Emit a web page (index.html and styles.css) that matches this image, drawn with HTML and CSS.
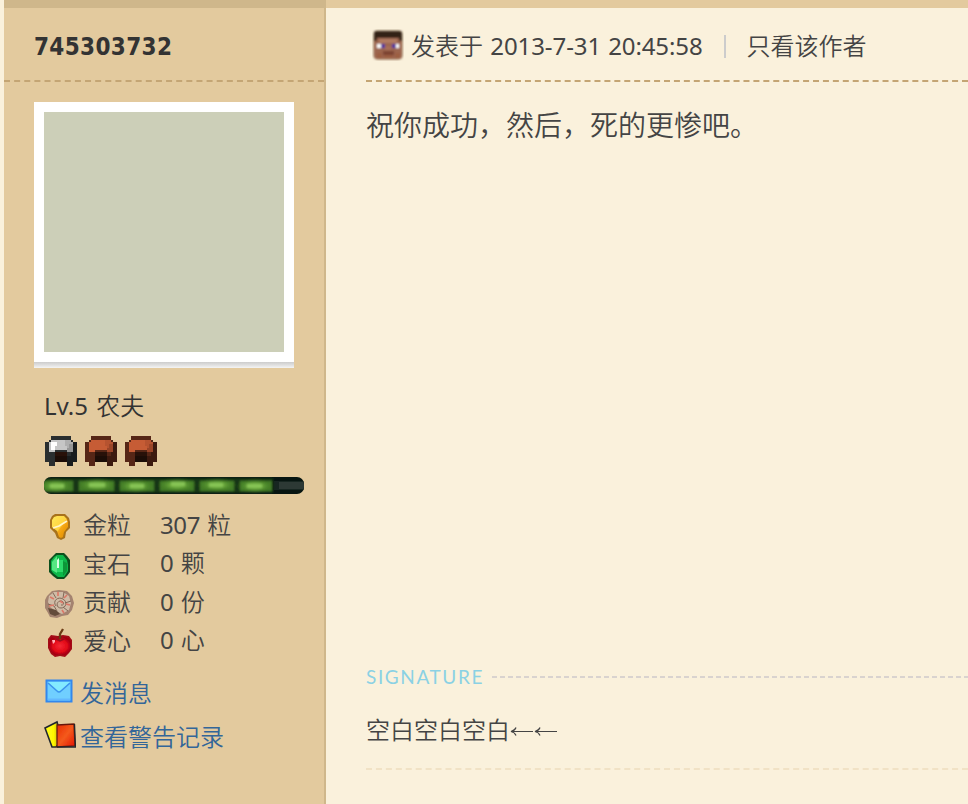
FILE: index.html
```html
<!DOCTYPE html>
<html lang="zh-CN">
<head>
<meta charset="utf-8">
<title>745303732</title>
<link rel="stylesheet" href="styles.css">
</head>
<body>
<svg class="defs" width="0" height="0">
  <defs>
    <linearGradient id="gold" x2="1" y2="1"><stop stop-color="#ffe85a"/><stop offset=".5" stop-color="#ffd43e"/><stop offset=".55" stop-color="#f7a915"/><stop offset="1" stop-color="#d98600"/></linearGradient>
    <linearGradient id="redcard" x2="1" y2="1"><stop stop-color="#e92a00"/><stop offset=".5" stop-color="#f45a1c"/><stop offset="1" stop-color="#e31200"/></linearGradient>
    <linearGradient id="yellowcard"><stop stop-color="#fffb20"/><stop offset=".5" stop-color="#fff600"/><stop offset="1" stop-color="#a89400"/></linearGradient>
    <radialGradient id="apple"><stop stop-color="#f52a35"/><stop offset=".65" stop-color="#e30918"/><stop offset="1" stop-color="#a60010"/></radialGradient>
    <radialGradient id="blob"><stop stop-color="#8acb57"/><stop offset=".4" stop-color="#69a83a" stop-opacity=".9"/><stop offset="1" stop-color="#3c7322" stop-opacity="0"/></radialGradient>
    <filter id="soft"><feGaussianBlur stdDeviation=".9"/></filter>
    <filter id="glow"><feGaussianBlur stdDeviation="1.3"/></filter>
    <filter id="fine"><feGaussianBlur stdDeviation=".45"/></filter>
    <g id="helmet">
      <path class="h-edge" d="M3 0h10v2h1v1h2v10h-2v2h-3V8H5v7H2v-2H0V3h2V2h1z"/>
      <path class="h-edge2" d="M14 3h2v10h-2v2h-3v-5h2V8h1z"/>
      <path class="h-main" d="M3 2h10v1h1v5h-3V7H5v1H2V3h1z"/>
      <path class="h-mid" d="M10 2h3v1h1v5h-3V5h-1z"/>
      <path class="h-shade" d="M12 4h2v4h-3V6h1z"/>
      <path class="h-hi" d="M3 3h3v2H5v2H3z"/>
      <path class="h-edge" d="M3 8h2V7h6v1h2v2H3z"/>
      <path fill="#281109" d="M5 8h6v5H5z"/>
      <path fill="#1c0d07" d="M5 10h6v3H5z"/>
    </g>
  </defs>
</svg>
<div class="post">
  <aside class="side">
    <div class="author">745303732</div>
    <div class="profile">
      <div class="avatar"><div class="photo"></div></div>
      <div class="info">
        <div class="level"><span class="num">Lv.5</span> 农夫</div>
        <div class="helmets">
          <svg class="iron" width="32" height="30" viewBox="0 0 16 15" shape-rendering="crispEdges"><use href="#helmet"/></svg>
          <svg class="leather" width="32" height="30" viewBox="0 0 16 15" shape-rendering="crispEdges"><use href="#helmet"/></svg>
          <svg class="leather" width="32" height="30" viewBox="0 0 16 15" shape-rendering="crispEdges"><use href="#helmet"/></svg>
        </div>
        <svg class="xp" width="260" height="18" viewBox="0 0 260 18">
          <clipPath id="pill"><rect width="260" height="17" rx="7"/></clipPath>
          <g clip-path="url(#pill)">
            <path fill="#071511" d="M0 0h260v17H0z"/>
            <path fill="#172621" d="M230 4h30v9h-30z"/><path fill="#2d3935" d="M235 5h25v7h-25z"/>
            <g filter="url(#glow)">
              <path fill="#163516" d="M-3 1h232v15H-3z"/>
              <path d="M-3 9h32M35 9h35M76 9h34M116 9h34M156 9h34M196 9h32" stroke="#427c26" stroke-width="10"/>
              <ellipse cx="12" cy="9" rx="17" ry="7" fill="url(#blob)"/><ellipse cx="53" cy="8" rx="20" ry="7" fill="url(#blob)"/><ellipse cx="92" cy="9" rx="19" ry="7" fill="url(#blob)"/><ellipse cx="133" cy="8" rx="20" ry="7" fill="url(#blob)"/><ellipse cx="173" cy="8" rx="20" ry="7" fill="url(#blob)"/><ellipse cx="211" cy="9" rx="19" ry="7" fill="url(#blob)"/>
              <path d="M6 9h14M45 8h16M86 9h14M127 7h14M165 8h14M203 9h15" stroke="#86c454" stroke-width="4"/>
            </g>
          </g>
        </svg>
        <ul class="stats">
          <li>
            <svg width="32" height="32" viewBox="0 0 32 32"><g filter="url(#fine)"><path d="M8 5l3-2h10l4 4 1 4v6l-4 4-1 6-4 2-4-2-2-5-5-5V9z" fill="#a8721a"/><path d="M10 6l3-1h7l3 3 1 3v5l-4 5-1 5-2 1-2-1-2-6-5-4V9z" fill="url(#gold)"/><path d="M9 17l6-2 8-5" fill="none" stroke="#fff5ca" stroke-width="1.8"/></g></svg>
            <span>金粒</span><span class="value"><span class="num">307</span> 粒</span>
          </li>
          <li>
            <svg width="32" height="32" viewBox="0 0 32 32"><g filter="url(#fine)"><path d="M12 3h8l3 3 3 4v12l-3 4-3 3h-7l-4-3-4-4V10l4-4z" fill="#08501f"/><path d="M13 5h6l4 5 1 5v6l-4 6h-6l-5-4-2-3v-9l3-4z" fill="#10b84a"/><path d="M13 6l-5 6v8l5 3V12z" fill="#56e783"/><path d="M13 10h6v12h-6z" fill="#2fdb6b"/><path d="M13 10l2-2v10h-2z" fill="#d7ffe3"/><path d="M19 11l4 2v8l-4 5z" fill="#079739"/></g></svg>
            <span>宝石</span><span class="value"><span class="num">0</span> 颗</span>
          </li>
          <li>
            <svg width="32" height="32" viewBox="0 0 32 32"><g filter="url(#fine)"><path d="M3 8l5-5 7-1 8 1 5 5 2 7-2 7-4 5-6 1-5 2-7-1-2-4-3-5V12z" fill="#a48370"/><path d="M5 8l5-4h9l6 4 2 7-2 7-7 4-6-3-6-4-2-5z" fill="#cfbba6"/><path d="M4 20l8 2 4 4-5 2-5-2z" fill="#634c3b"/><path d="M12 18c-4-5 2-10 7-7s3 9-2 9-5-6-1-7 5 5 1 4M4 16l6 2 3 5M9 5l3 5M20 4l-1 6m8 3-6 2m3 8-5-4" fill="none" stroke="#826857" stroke-width="1"/><path d="M6 9l4 2m4-7v4m9-1-3 3m6 7-4-1M5 18l5-1m10 8-2-3M16 13l3 2" stroke="#dc7766" stroke-width="1.6"/></g></svg>
            <span>贡献</span><span class="value"><span class="num">0</span> 份</span>
          </li>
          <li>
            <svg width="32" height="32" viewBox="0 0 32 32"><g filter="url(#fine)"><path d="M7 8l7 1 5-1 6 1 3 4v9l-3 4-4 4-5-1-5 1-4-3-3-6V12z" fill="#a30a19"/><path d="M7 10l8 3 5-3 5 1 2 5-1 7-5 5-5-1-5 1-4-4-2-7z" fill="url(#apple)"/><path d="M16 12V7l3-5" fill="none" stroke="#6b3a14" stroke-width="2.3"/><path d="M8 13h3v2l-2 2z" fill="#ffafb5"/><path d="M12 12l4 2 4-2" fill="none" stroke="#98101b" stroke-width="1.5"/></g></svg>
            <span>爱心</span><span class="value"><span class="num">0</span> 心</span>
          </li>
        </ul>
        <div class="links">
          <a><svg width="32" height="32" viewBox="0 0 32 32"><g filter="url(#fine)"><rect x="2.500" y="4.500" width="25" height="21" fill="#70cfff" stroke="#3187ed" stroke-width="2"/><path d="M4 6h22l-9 10h-4z" fill="#83eaff"/><path d="M4 7l9 8q2 2 4 0l9-8" fill="none" stroke="#3b93ed" stroke-width="1.6"/><path d="M4 23.500h22" stroke="#63b8ff" stroke-width="2"/></g></svg>发消息</a>
          <a><svg width="32" height="32" viewBox="0 0 32 32"><g filter="url(#fine)"><path d="M1 8L13 2l5 19-6 6H8z" fill="url(#yellowcard)" stroke="#24282e" stroke-width="1.6"/><path d="M13 5 30 4l1 22-18 1z" fill="url(#redcard)" stroke="#66180b" stroke-width="1.3"/><path d="M30.500 4l1 23H13" fill="none" stroke="#24282e" stroke-width="1.3"/></g></svg>查看警告记录</a>
        </div>
      </div>
    </div>
  </aside>
  <main class="content">
    <header class="meta">
      <svg class="face" width="32" height="32" viewBox="0 0 32 32"><g filter="url(#soft)"><rect x="1" y="1" width="30" height="30" rx="5" fill="#8b7356" opacity=".6"/><rect x="2" y="2" width="28" height="28" rx="3" fill="#9c654d"/><path d="M2 4q0-2 3-2h22q3 0 3 2v8h-3V9H5v3H2z" fill="#332315"/><path d="M7 10h18v4H7z" fill="#b17a62"/><path d="M5 15h5v4H5zm17 0h5v4h-5z" fill="#fff"/><path d="M9 15h4v4H9zm11 0h4v4h-4z" fill="#5136a0"/><path d="M13 17h6v4h-6z" fill="#a76e58"/><path d="M11 22h11v4H11z" fill="#7c4230"/><path d="M5 24h5v5H5zm18 0h5v5h-5zM12 26h9v3h-9z" fill="#9c5f43"/></g></svg>
      <span class="date">发表于 <span class="num">2013-7-31 20:45:58</span></span><span class="pipe"></span><span>只看该作者</span>
    </header>
    <div class="message">祝你成功，然后，死的更惨吧。</div>
    <section class="signature">
      <div class="sigtitle"><span>SIGNATURE</span><i></i></div>
      <div class="sigtext">空白空白空白<svg width="48" height="20" viewBox="0 0 48 20" fill="none" stroke="#444" stroke-width="1.2"><path d="M6 8.500q-1 3-5 4 4 1 5 4M1 12.500h22M30 8.500q-1 3-5 4 4 1 5 4M25 12.500h22"/></svg></div>
    </section>
  </main>
</div>
</body>
</html>
```
FILE: styles.css
```css
* { box-sizing: border-box; }
body {
  margin: 0;
  padding-left: 4px;
  height: 804px;
  overflow: hidden;
  background: #faf1dc;
  color: #444;
  font: 24px/36px "Noto Sans CJK SC", sans-serif;
  font-weight: 350;
}
svg { display: block; flex: none; }
.defs { position: absolute; }
.num { font-family: "Noto Sans", sans-serif; font-weight: 400; letter-spacing: -.4px; word-spacing: 1px; margin-right: 2px; }
.level .num { letter-spacing: 0; margin-right: 3px; }
.post { display: flex; height: 804px; }
.side {
  width: 322px;
  flex: none;
  background: #e3ca9e;
  border-top: 8px solid #cfb78b;
  border-right: 2px solid #cfb78b;
}
.author {
  height: 74px;
  padding: 21px 30px 0;
  border-bottom: 2px dashed #c4a574;
  color: #333;
  font: bold 24px/36px "DejaVu Sans Condensed", "DejaVu Sans", sans-serif;
  font-stretch: condensed;
  letter-spacing: .35px;
}
.profile { padding: 20px 18px 0 30px; }
.avatar {
  width: 260px;
  height: 266px;
  padding: 10px;
  background: linear-gradient(#fff 260px, #ccc 260px, #f4f4f4 266px);
}
.photo { height: 240px; background: #cccfb8; }
.info { padding: 19px 0 0 10px; }
.level { color: #333; }
.helmets { display: flex; gap: 8px; padding: 12px 0 0 1px; }
.iron { --edge: #2a2e2f; --edge2: #191c1d; --main: #c6c6c6; --mid: #afafaf; --shade: #969696; --hi: #fff; }
.leather { --edge: #562616; --edge2: #3c1a0f; --main: #c65c35; --mid: #b65330; --shade: #9b4528; --hi: #c65c35; }
.h-edge { fill: var(--edge); }
.h-edge2 { fill: var(--edge2); }
.h-main { fill: var(--main); }
.h-mid { fill: var(--mid); }
.h-shade { fill: var(--shade); }
.h-hi { fill: var(--hi); }
.xp { margin-top: 11px; }
.stats { list-style: none; margin: 10px 0 0; padding: 0; }
.stats li { display: flex; align-items: center; height: 38.500px; }
.stats li > span:nth-of-type(1) { width: 84px; padding-left: 7px; }
.stats svg { position: relative; top: 3px; }
.links { display: flex; flex-direction: column; gap: 8px; margin-top: 15px; }
.links a { display: flex; align-items: center; gap: 4px; color: #369; }
.content { flex: 1; min-width: 0; border-top: 8px solid #e3ca9e; padding-left: 40px; }
.meta {
  display: flex;
  align-items: center;
  height: 74px;
  padding: 2px 0 0 6px;
  border-bottom: 2px dashed #c4a574;
  white-space: nowrap;
}
.date { margin-left: 7px; }
.date .num { letter-spacing: -.1px; margin-left: 2px; }
.pipe { width: 2px; height: 23px; margin: 3px 21px 0 19px; background: #ccc; }
.message { height: 580px; padding-top: 21px; font-size: 28px; line-height: 42px; }
.sigtitle { display: flex; align-items: center; height: 30px; color: #8bd1e4; font: 19px/30px Lato, sans-serif; }
.sigtitle span { width: 126px; letter-spacing: 1.6px; }
.sigtitle i { flex: 1; height: 2px; background: repeating-linear-gradient(90deg, #d9d3cf 0 5px, transparent 5px 8px); }
.sigtext { display: flex; align-items: center; height: 78px; padding-bottom: 2px; border-bottom: 2px dashed #f1e2c5; }
```
